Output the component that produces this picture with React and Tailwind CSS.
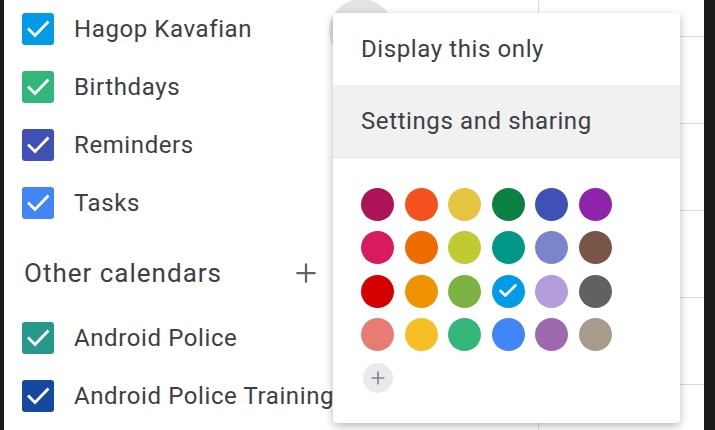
import { Plus, Check } from "lucide-react";

const myCalendars = [
  { name: "Hagop Kavafian", color: "bg-[#039be5]" },
  { name: "Birthdays", color: "bg-[#33b679]" },
  { name: "Reminders", color: "bg-[#3f51b5]" },
  { name: "Tasks", color: "bg-[#4285f4]" },
];

const otherCalendars = [
  { name: "Android Police", color: "bg-[#26998a]" },
  { name: "Android Police Training", color: "bg-[#15489f]" },
];

const swatches = [
  "bg-[#ad1457]", "bg-[#f4511e]", "bg-[#e4c441]", "bg-[#0b8043]", "bg-[#3f51b5]", "bg-[#8e24aa]",
  "bg-[#d81b60]", "bg-[#ef6c00]", "bg-[#c0ca33]", "bg-[#009688]", "bg-[#7986cb]", "bg-[#795548]",
  "bg-[#d50000]", "bg-[#f09300]", "bg-[#7cb342]", "bg-[#039be5]", "bg-[#b39ddb]", "bg-[#616161]",
  "bg-[#e67c73]", "bg-[#f6bf26]", "bg-[#33b679]", "bg-[#4285f4]", "bg-[#9e69af]", "bg-[#a79b8e]",
];

function CheckBox({ color }) {
  return (
    <div className={`flex h-[32px] w-[32px] shrink-0 items-center justify-center rounded-[3px] ${color}`}>
      <svg width="32" height="32" viewBox="0 0 32 32" fill="none">
        <path d="M7 16.5l6 6L25.5 9.5" stroke="white" strokeWidth="2.8" strokeLinecap="square" />
      </svg>
    </div>
  );
}

function CalendarRow({ cal }) {
  return (
    <div className="flex h-[58px] items-center gap-[20px] whitespace-nowrap pl-[18px]">
      <CheckBox color={cal.color} />
      <span className="text-[24px] tracking-[0.6px] text-[#3c4043]">{cal.name}</span>
    </div>
  );
}

export default function App() {
  return (
    <div className="relative flex h-[430px] w-[715px] overflow-hidden bg-white font-['Roboto',sans-serif]">
      <div className="w-[4px] shrink-0 bg-[#1a1a1a]" />

      <aside className="w-[534px] shrink-0 overflow-hidden">
        <div>
          {myCalendars.map((cal) => (
            <CalendarRow key={cal.name} cal={cal} />
          ))}
        </div>
        <div className="flex h-[77px] items-center pl-[20px] pt-[5px]">
          <span className="w-[267px] text-[26px] tracking-[1px] text-[#3c4043]">Other calendars</span>
          <Plus size={30} strokeWidth={1.8} className="text-[#5f6368]" />
        </div>
        {otherCalendars.map((cal) => (
          <CalendarRow key={cal.name} cal={cal} />
        ))}
      </aside>

      <main className="flex flex-1 flex-col border-l border-[#dadce0]">
        <div className="h-[37px] shrink-0 border-b border-[#dadce0]" />
        <div className="h-[87px] shrink-0 border-b border-[#dadce0]" />
        <div className="h-[87px] shrink-0 border-b border-[#dadce0]" />
        <div className="h-[87px] shrink-0 border-b border-[#dadce0]" />
        <div className="h-[87px] shrink-0 border-b border-[#dadce0]" />
      </main>

      <div className="w-[11px] shrink-0 bg-[#1a1a1a]" />

      {/* hover circle of the overflow button, under the menu */}
      <div className="absolute left-[329px] top-[-1px] h-[65px] w-[65px] rounded-full bg-[#e3e3e3]" />

      {/* calendar options menu */}
      <div className="absolute left-[333px] top-[13px] flex h-[410px] w-[347px] flex-col rounded-[4px] bg-white shadow-[0_3px_10px_rgba(0,0,0,0.28)]">
        <div className="flex h-[72px] items-center px-[28px] text-[24px] tracking-[0.6px] text-[#3c4043]">Display this only</div>
        <div className="flex h-[73px] items-center border-b border-[#e3e3e3] bg-[#f1f1f1] px-[28px] text-[24px] tracking-[0.6px] text-[#3c4043]">
          Settings and sharing
        </div>
        <div className="grid w-fit grid-cols-6 gap-x-[10.5px] gap-y-[10.3px] pl-[28px] pt-[30px]">
          {swatches.map((c, i) => (
            <div key={i} className={`flex h-[33px] w-[33px] items-center justify-center rounded-full ${c}`}>
              {i === 15 && <Check size={22} strokeWidth={3} className="text-white" />}
            </div>
          ))}
          <div className="flex h-[33px] w-[33px] items-center justify-center">
            <div className="flex h-[30px] w-[30px] items-center justify-center rounded-full bg-[#e8eaed]">
              <Plus size={20} strokeWidth={2} className="text-[#80868b]" />
            </div>
          </div>
        </div>
      </div>
    </div>
  );
}
